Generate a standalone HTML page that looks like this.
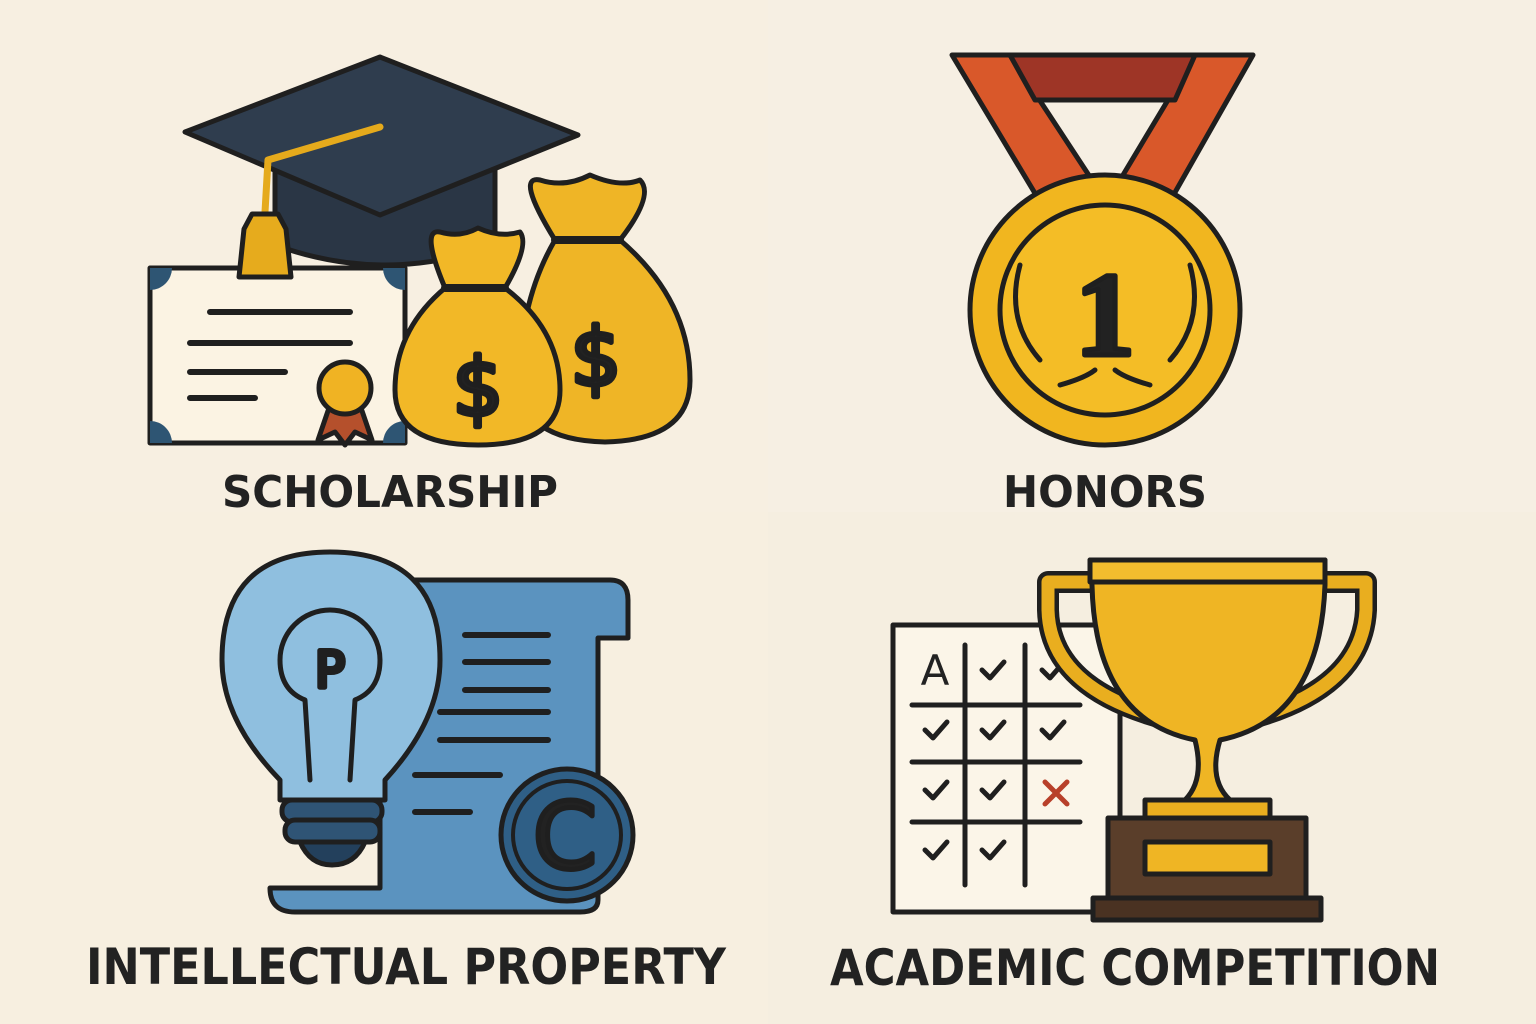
<!DOCTYPE html>
<html><head><meta charset="utf-8"><style>
html,body{margin:0;padding:0;background:#f7f0e3;}
svg{display:block}
text{font-family:"DejaVu Sans","Liberation Sans",sans-serif;font-weight:bold;fill:#222}
</style></head><body>
<svg width="1536" height="1024" viewBox="0 0 1536 1024" xmlns="http://www.w3.org/2000/svg">
<rect x="0" y="0" width="768" height="512" fill="#f7efe1"/>
<rect x="768" y="0" width="768" height="512" fill="#f6efe3"/>
<rect x="0" y="512" width="768" height="512" fill="#f7efe0"/>
<rect x="768" y="512" width="768" height="512" fill="#f5eee0"/>
<g stroke="#1f1f1f" stroke-width="5" stroke-linejoin="round" stroke-linecap="round">
<path d="M275 165 L495 165 L495 245 Q385 285 275 245 Z" fill="#2a3645"/>
<polygon points="185,132 380,57 578,135 380,215" fill="#2f3d4e"/>
<rect x="150" y="268" width="255" height="175" fill="#fbf3e3"/>
<path d="M150 268 h22 a22 22 0 0 1 -22 22 Z M405 268 h-22 a22 22 0 0 0 22 22 Z M150 443 h22 a22 22 0 0 0 -22 -22 Z M405 443 h-22 a22 22 0 0 1 22 -22 Z" fill="#2e5573" stroke-width="0"/>
<path d="M210 312 H350 M190 343 H350 M190 372 H285 M190 398 H255" stroke-width="6" fill="none"/>
<path d="M330 405 L318 440 L335 432 L345 445 L355 432 L372 440 L360 405 Z" fill="#b5502c"/>
<circle cx="345" cy="388" r="26" fill="#f0b323"/>
<path d="M380 127 L268 160 L265 212" stroke="#e5aa1c" stroke-width="7" fill="none"/>
<path d="M252 214 h26 l8 15 l5 48 h-52 l5 -48 Z" fill="#e6ab1d"/>
<path d="M555 240 Q515 175 540 180 Q565 188 590 175 Q620 188 640 180 Q655 195 620 240 Q690 300 690 380 Q690 440 605 442 Q520 440 520 380 Q520 300 555 240 Z" fill="#efb526"/>
<path d="M555 240 H620" stroke-width="8"/>
<text x="596" y="385" font-size="80" text-anchor="middle" style="font-weight:normal">$</text>
<path d="M445 288 Q420 228 440 232 Q460 238 478 228 Q500 238 520 232 Q530 245 505 288 Q560 330 560 390 Q560 445 478 445 Q395 445 395 390 Q395 330 445 288 Z" fill="#f2b827"/>
<path d="M445 288 H505" stroke-width="8"/>
<text x="478" y="415" font-size="80" text-anchor="middle" style="font-weight:normal">$</text>
<polygon points="952,55 1010,55 1092,180 1045,210" fill="#d9582a"/>
<polygon points="1195,55 1253,55 1165,210 1120,180" fill="#d9582a"/>
<polygon points="1010,55 1195,55 1175,100 1035,100" fill="#9e3526"/>
<circle cx="1105" cy="310" r="135" fill="#f1b61f"/>
<circle cx="1105" cy="310" r="105" fill="#f4bd26"/>
<path d="M1040 360 Q1005 320 1020 265 M1170 360 Q1205 320 1190 265 M1060 385 Q1085 378 1095 370 M1150 385 Q1125 378 1115 370" fill="none" stroke-width="5"/>
<text x="1105" y="355" font-size="120" text-anchor="middle" fill="#f4bd26" stroke="#1f1f1f" stroke-width="5" style="font-family:'Liberation Serif',serif">1</text>
<path d="M380 580 H610 Q628 580 628 600 V638 H598 V900 Q598 912 580 912 H295 Q270 912 270 888 H380 Z" fill="#5b93bf"/>
<path d="M465 635 H548 M465 662 H548 M465 690 H548 M440 712 H548 M440 740 H548 M415 775 H500 M415 812 H470" stroke-width="6" fill="none"/>
<path d="M330 552 Q440 552 440 660 Q440 720 385 780 L385 800 H280 L280 780 Q222 720 222 660 Q222 552 330 552 Z" fill="#8fbfdf"/>
<path d="M310 780 L305 700 Q280 690 280 660 A50 50 0 1 1 380 660 Q380 690 355 700 L350 780" fill="none" stroke-width="5"/>
<text x="330" y="687" font-size="50" text-anchor="middle" style="font-weight:normal">P</text>
<rect x="282" y="800" width="100" height="22" rx="10" fill="#2f5475"/>
<rect x="285" y="820" width="95" height="22" rx="10" fill="#2f5475"/>
<path d="M300 842 H365 Q355 865 332 865 Q310 865 300 842 Z" fill="#23405c"/>
<circle cx="567" cy="835" r="66" fill="#2f5f86"/>
<circle cx="567" cy="835" r="54" fill="#2f5f86" stroke-width="4"/>
<text x="565" y="868" font-size="92" text-anchor="middle" fill="#1f1f1f" style="font-weight:normal">C</text>
<rect x="893" y="625" width="227" height="287" fill="#fbf5e8"/>
<path d="M912 705 H1080 M912 762 H1080 M912 822 H1080 M965 645 V885 M1025 645 V885" stroke-width="5" fill="none"/>
<text x="935" y="685" font-size="42" text-anchor="middle" stroke-width="0" style="font-weight:normal">A</text>
<path d="M982 670 l8 8 l14 -16 M1042 670 l8 8 l14 -16 M925 730 l8 8 l14 -16 M982 730 l8 8 l14 -16 M1042 730 l8 8 l14 -16 M925 790 l8 8 l14 -16 M982 790 l8 8 l14 -16 M925 850 l8 8 l14 -16 M982 850 l8 8 l14 -16" fill="none" stroke-width="5"/>
<path d="M1045 782 l22 22 M1067 782 l-22 22" stroke="#b8402a" stroke-width="5"/>
<path d="M1095 582 H1048 V610 Q1050 690 1170 720 M1315 582 H1366 V610 Q1362 690 1245 720" fill="none" stroke="#1f1f1f" stroke-width="22"/>
<path d="M1095 582 H1048 V610 Q1050 690 1170 720 M1315 582 H1366 V610 Q1362 690 1245 720" fill="none" stroke="#e9ae1f" stroke-width="13"/>
<path d="M1090 560 H1325 V585 Q1320 720 1220 740 Q1208 780 1230 800 H1185 Q1205 780 1195 740 Q1095 720 1092 585 Z" fill="#efb524"/>
<rect x="1090" y="560" width="235" height="22" fill="#f3bd2e"/>
<rect x="1145" y="800" width="125" height="18" fill="#e9ae1f"/>
<rect x="1108" y="818" width="198" height="82" fill="#5a3e2a"/>
<rect x="1145" y="842" width="125" height="32" fill="#efb524"/>
<rect x="1093" y="898" width="228" height="22" fill="#4a3222"/>
</g>
<text x="390" y="507" font-size="44" text-anchor="middle" textLength="336" lengthAdjust="spacingAndGlyphs">SCHOLARSHIP</text>
<text x="1105" y="507" font-size="44" text-anchor="middle" textLength="204" lengthAdjust="spacingAndGlyphs">HONORS</text>
<text x="406" y="984" font-size="50" text-anchor="middle" textLength="640" lengthAdjust="spacingAndGlyphs">INTELLECTUAL PROPERTY</text>
<text x="1135" y="985" font-size="50" text-anchor="middle" textLength="610" lengthAdjust="spacingAndGlyphs">ACADEMIC COMPETITION</text>
</svg>
</body></html>
